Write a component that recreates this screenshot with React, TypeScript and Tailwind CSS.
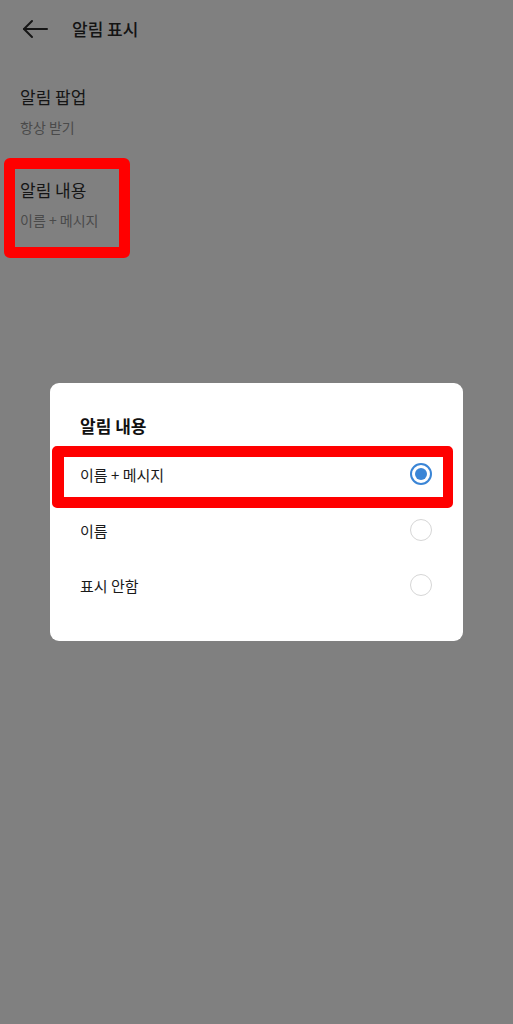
import React from "react";

const font = { fontFamily: '"Noto Sans CJK KR", "Noto Sans", sans-serif' };

function Radio({ checked }: { checked: boolean }) {
  return checked ? (
    <div className="w-[22px] h-[22px] rounded-full border-2 border-[#3a85d6] flex items-center justify-center">
      <div className="w-[12px] h-[12px] rounded-full bg-[#3a85d6]" />
    </div>
  ) : (
    <div className="w-[22px] h-[22px] rounded-full border-[1.5px] border-[#d6d6d6]" />
  );
}

export default function App() {
  return (
    <div className="relative w-[513px] h-[1024px] bg-[#808080] overflow-hidden" style={font}>
      {/* Header */}
      <div className="flex items-center h-[57px]">
        <div className="w-[72px] flex items-center pl-[22px]">
          <svg width="26" height="20" viewBox="0 0 26 20" fill="none" stroke="#161616" strokeWidth="2" strokeLinecap="round" strokeLinejoin="round">
            <path d="M25 10H2" />
            <path d="M10 2L2 10l8 8" />
          </svg>
        </div>
        <div className="text-[17px] font-medium text-[#141414] leading-none">알림 표시</div>
      </div>

      {/* Item 1 */}
      <div className="pl-[20px] pt-[29px]">
        <div className="text-[17px] text-[#151515] leading-[22px]">알림 팝업</div>
        <div className="text-[14px] text-[#4a4a4a] leading-[18px] mt-[10px]">항상 받기</div>
      </div>

      {/* Item 2 with red annotation */}
      <div className="ml-[4px] mt-[22px] w-[126px] h-[100px] border-[11px] border-[#ff0000] rounded-[6px] pl-[5px] pt-[10px]">
        <div className="text-[17px] text-[#151515] leading-[22px]">알림 내용</div>
        <div className="text-[14px] text-[#4a4a4a] leading-[18px] mt-[10px]">이름 + 메시지</div>
      </div>

      {/* Dialog */}
      <div className="absolute inset-0 flex items-center justify-center">
        <div className="w-[413px] h-[258px] bg-white rounded-[9px] pt-[31px]">
          <div className="pl-[30px] text-[17px] font-bold text-[#111] leading-[24px] h-[32px]">알림 내용</div>
          <div className="ml-[2px] mr-[10px] border-[#ff0000] border-t-[11px] border-b-[11px] border-l-[12px] border-r-[10px] rounded-[5px] h-[62px] flex items-center justify-between pl-[16px] pr-[11px]">
            <span className="text-[15px] text-[#1a1a1a] leading-none -mt-[5px]">이름 + 메시지</span>
            <div className="-mt-[7px]"><Radio checked /></div>
          </div>
          <div className="h-[44px] flex items-center justify-between pl-[30px] pr-[31px]">
            <span className="text-[15px] text-[#1a1a1a] leading-none">이름</span>
            <Radio checked={false} />
          </div>
          <div className="mt-[11px] h-[44px] flex items-center justify-between pl-[30px] pr-[31px]">
            <span className="text-[15px] text-[#1a1a1a] leading-none">표시 안함</span>
            <Radio checked={false} />
          </div>
        </div>
      </div>
    </div>
  );
}
